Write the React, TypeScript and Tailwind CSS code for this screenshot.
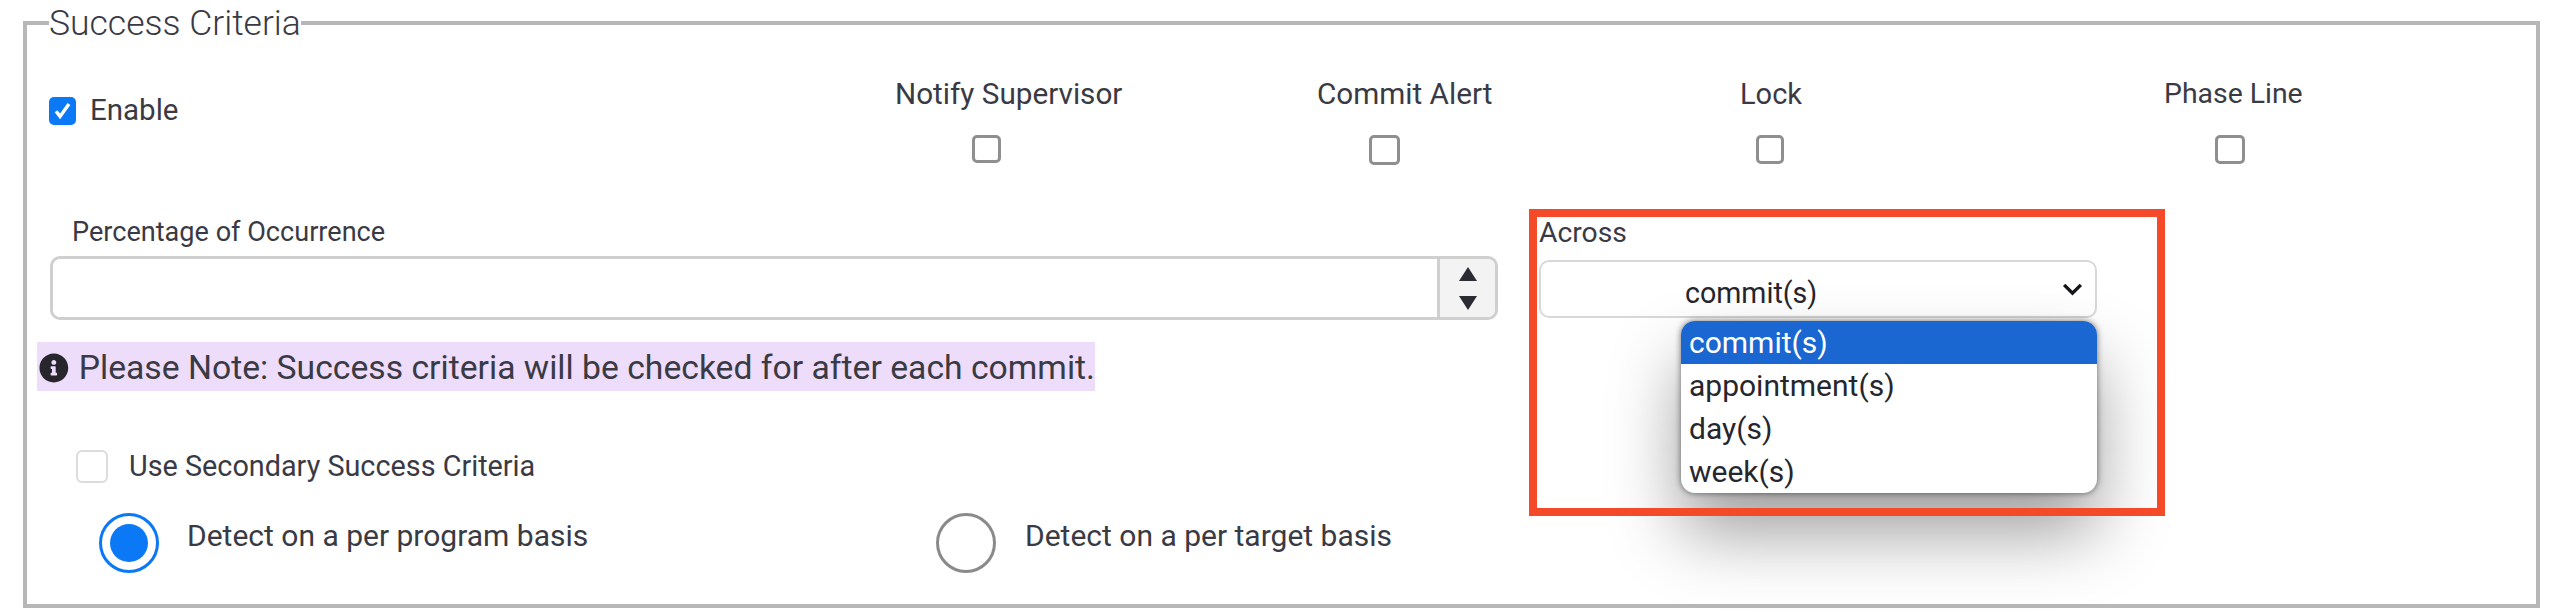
import { FaInfoCircle } from 'react-icons/fa';

function Box({ className, checked }: { className: string; checked?: boolean }) {
  return (
    <span className={`flex items-center justify-center ${className}`}>
      {checked && (
        <svg viewBox="0 0 16 16" className="w-[23px] h-[23px]">
          <path d="M3.5 8.5l2.8 3.6L12.5 3.5" fill="none" stroke="white" strokeWidth="2.4" />
        </svg>
      )}
    </span>
  );
}

function Flag({ label, boxClass, textClass }: { label: string; boxClass: string; textClass: string }) {
  return (
    <div className="flex flex-col items-start">
      <span className={`leading-[36px] whitespace-nowrap ${textClass}`}>{label}</span>
      <Box className={boxClass} />
    </div>
  );
}

const options = ['commit(s)', 'appointment(s)', 'day(s)', 'week(s)'];

export default function App() {
  return (
    <div className="h-[612px] w-[2552px] overflow-hidden bg-white pl-[23px] pt-[1px] font-['Roboto',sans-serif] text-[#3a3a44]">
      <fieldset className="h-[607px] w-[2517px] border-4 border-[#b7b7b7]">
        <legend className="ml-[22px] text-[35.5px] leading-[44px] font-light">Success Criteria</legend>

        <div className="grid grid-cols-[868px_422px_423px_424px_1fr] pt-[31px]">
          <label className="flex h-[64px] items-center pl-[22px] pt-[5px]">
            <Box checked className="h-[28px] w-[27px] rounded-[5px] bg-[#0b79f6]" />
            <span className="ml-[14px] text-[29.5px]">Enable</span>
          </label>
          <Flag label="Notify Supervisor" textClass="text-[29.7px]" boxClass="ml-[77px] mt-[23px] h-[28px] w-[29px] rounded-[5px] border-[3px] border-[#8f8f8f]" />
          <Flag label="Commit Alert" textClass="text-[29.7px]" boxClass="ml-[52px] mt-[23px] h-[30px] w-[31px] rounded-[5px] border-[3px] border-[#8f8f8f]" />
          <Flag label="Lock" textClass="text-[29px]" boxClass="ml-[16px] mt-[23px] h-[29px] w-[28px] rounded-[5px] border-[3px] border-[#8f8f8f]" />
          <Flag label="Phase Line" textClass="text-[28.4px]" boxClass="ml-[51px] mt-[23px] h-[29px] w-[30px] rounded-[5px] border-[3px] border-[#8f8f8f]" />
        </div>

        <div className="flex pl-[23px] pt-[51px]">
          <div className="w-[1489px]">
            <div className="pl-[22px] text-[27.1px] leading-[32px]">Percentage of Occurrence</div>
            <div className="mt-[8px] flex h-[64px] w-[1448px] rounded-[10px] border-[3px] border-[#cfcfcf]">
              <input className="min-w-0 flex-1 rounded-[8px] bg-white" />
              <div className="flex w-[58px] flex-col items-center justify-center gap-[15px] rounded-r-[8px] border-l-[3px] border-[#cfcfcf] bg-[#f3f3f3]">
                <svg viewBox="0 0 18 14" className="h-[14px] w-[18px]"><path d="M9 0l9 14H0z" fill="#2b2b33" /></svg>
                <svg viewBox="0 0 18 14" className="h-[14px] w-[18px]"><path d="M0 0h18L9 14z" fill="#2b2b33" /></svg>
              </div>
            </div>
          </div>

          <div className="relative w-[558px]">
            <div className="pt-[1px] text-[28.3px] leading-[32px]">Across</div>
            <div className="mt-[11px] flex h-[58px] w-[558px] items-center rounded-[10px] border-2 border-[#d8d8d8] bg-white pl-[144px] pt-[8px] text-[28.6px] text-[#26262c]">
              commit(s)
              <svg viewBox="0 0 22 14" className="ml-auto mr-[12px] mb-[8px] h-[13px] w-[21px]">
                <path d="M2 2l9 9 9-9" fill="none" stroke="#15151a" strokeWidth="3.6" />
              </svg>
            </div>
            <div className="absolute left-[142px] top-[105px] w-[416px] overflow-hidden rounded-[14px] bg-white text-[30px] leading-[43px] text-[#26262c] shadow-[0_0_6px_rgba(0,0,0,0.55),0_40px_70px_rgba(0,0,0,0.38)]">
              {options.map((o, i) => (
                <div key={o} className={i === 0 ? 'bg-[#1a67d2] pl-[8px] text-white' : 'pl-[8px]'}>
                  {o}
                </div>
              ))}
            </div>
            <div className="absolute -left-[10px] -top-[7px] h-[307px] w-[636px] border-[8px] border-[#f44a29]" />
          </div>
        </div>

        <div className="ml-[10px] mt-[22px] flex h-[49px] w-[1058px] items-center bg-[#eedcfb] pl-[2px] text-[33.7px] whitespace-nowrap">
          <FaInfoCircle className="mt-[2px] h-[30px] w-[30px] text-[#26262c]" />
          <span className="ml-[10px] pt-[3px]">Please Note: Success criteria will be checked for after each commit.</span>
        </div>

        <label className="ml-[49px] mt-[59px] flex h-[33px] items-center">
          <Box className="h-[33px] w-[32px] rounded-[6px] border-2 border-[#dcdcdc]" />
          <span className="ml-[21px] text-[28.8px]">Use Secondary Success Criteria</span>
        </label>

        <div className="ml-[72px] mt-[30px] grid grid-cols-[837px_1fr]">
          <label className="flex items-start">
            <span className="flex h-[60px] w-[60px] items-center justify-center rounded-full border-[3px] border-[#0b79f6]">
              <span className="h-[38px] w-[38px] rounded-full bg-[#0b79f6]" />
            </span>
            <span className="ml-[28px] text-[30px] leading-[46px]">Detect on a per program basis</span>
          </label>
          <label className="flex items-start">
            <span className="h-[60px] w-[60px] rounded-full border-[3px] border-[#8a8a8a]" />
            <span className="ml-[29px] text-[30px] leading-[46px]">Detect on a per target basis</span>
          </label>
        </div>
      </fieldset>
    </div>
  );
}
